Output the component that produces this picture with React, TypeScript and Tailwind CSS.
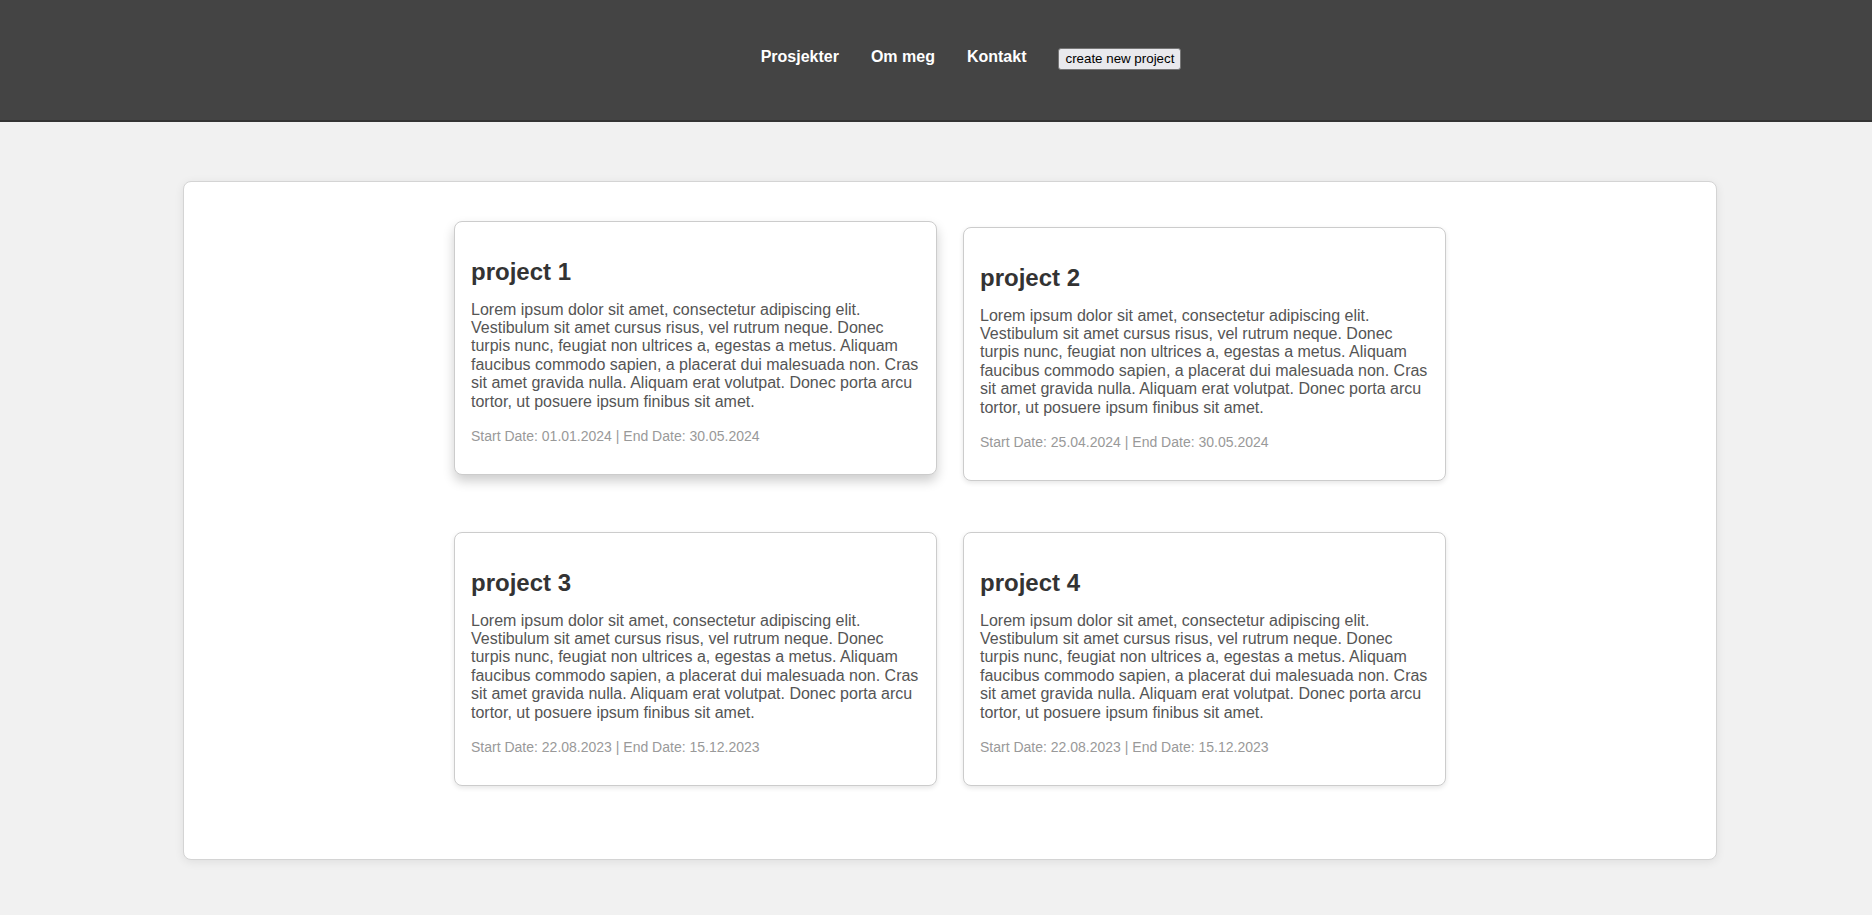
const lorem =
  'Lorem ipsum dolor sit amet, consectetur adipiscing elit. Vestibulum sit amet cursus risus, vel rutrum neque. Donec turpis nunc, feugiat non ultrices a, egestas a metus. Aliquam faucibus commodo sapien, a placerat dui malesuada non. Cras sit amet gravida nulla. Aliquam erat volutpat. Donec porta arcu tortor, ut posuere ipsum finibus sit amet.';

const projects = [
  { id: 1, title: 'project 1', start: '01.01.2024', end: '30.05.2024', hovered: true },
  { id: 2, title: 'project 2', start: '25.04.2024', end: '30.05.2024' },
  { id: 3, title: 'project 3', start: '22.08.2023', end: '15.12.2023' },
  { id: 4, title: 'project 4', start: '22.08.2023', end: '15.12.2023' },
];

export default function App() {
  return (
    <div className="min-h-screen bg-[#f1f1f1] font-['Liberation_Sans',Arial,sans-serif]">
      {/* Header */}
      <header className="h-[122px] bg-[#444444] border-b-2 border-[#333333]">
        <nav className="flex items-start justify-center gap-8 pl-[70px] pt-12">
          <a className="text-base font-bold text-white leading-[18px] cursor-pointer">Prosjekter</a>
          <a className="text-base font-bold text-white leading-[18px] cursor-pointer">Om meg</a>
          <a className="text-base font-bold text-white leading-[18px] cursor-pointer">Kontakt</a>
          <button className="h-[22px] flex items-center px-[6px] text-[13.33px] text-black bg-[#e9e9ed] border border-[#767676] rounded-[3px]">
            create new project
          </button>
        </nav>
      </header>

      {/* Projects panel */}
      <main className="pt-[59px] pb-[55px]">
        <div className="ml-[183px] w-[1534px] bg-white border border-[#d4d4d4] rounded-lg shadow-[0_2px_10px_rgba(0,0,0,0.08)] pt-[45px] pb-[73px]">
          <div className="grid grid-cols-[483px_483px] justify-center gap-x-[26px] gap-y-[51px]">
            {projects.map((p) => (
              <div
                key={p.id}
                className={`bg-white border border-[#cccccc] rounded-lg px-4 pt-4 pb-4 ${
                  p.hovered
                    ? '-translate-y-[6px] shadow-[0_6px_12px_rgba(0,0,0,0.2)]'
                    : 'shadow-[0_2px_5px_rgba(0,0,0,0.1)]'
                }`}
              >
                <h2 className="mt-5 mb-[15px] text-2xl leading-[27.6px] font-bold text-[#333333]">{p.title}</h2>
                <p className="text-base leading-[18.4px] text-[#555555]">{lorem}</p>
                <p className="mt-[17px] mb-[14px] text-sm leading-[16px] text-[#999999]">
                  Start Date: {p.start} | End Date: {p.end}
                </p>
              </div>
            ))}
          </div>
        </div>
      </main>
    </div>
  );
}
